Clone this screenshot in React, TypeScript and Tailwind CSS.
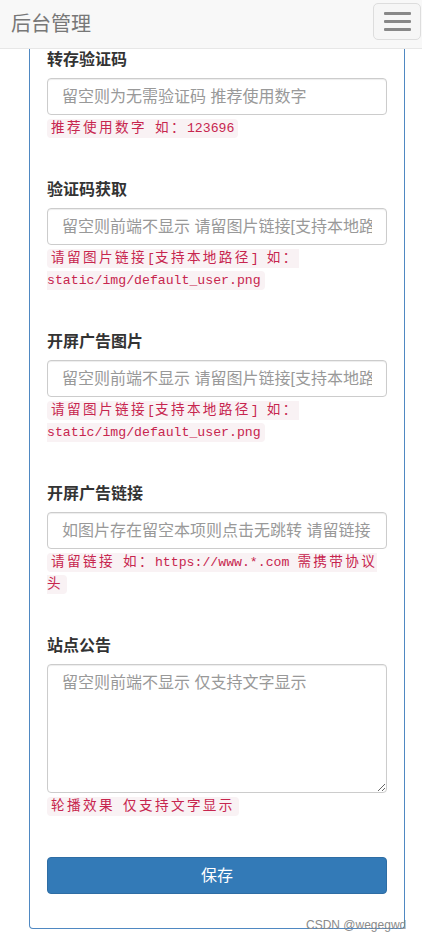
const fields = [
  {
    label: "转存验证码",
    placeholder: "留空则为无需验证码 推荐使用数字",
    help: (
      <>
        <span className="tracking-[2.4px] text-[13.6px]">推荐使用数字</span> <span className="tracking-[2.4px] text-[13.6px]">如：</span>123696
      </>
    ),
  },
  {
    label: "验证码获取",
    placeholder: "留空则前端不显示 请留图片链接[支持本地路径]",
    help: (
      <>
        <span className="tracking-[2.4px] text-[13.6px]">请留图片链接</span>[<span className="tracking-[2.4px] text-[13.6px]">支持本地路径</span>] <span className="tracking-[2.4px] text-[13.6px]">如：</span>
        <span className="whitespace-nowrap">static/img/default_user.png</span>
      </>
    ),
  },
  {
    label: "开屏广告图片",
    placeholder: "留空则前端不显示 请留图片链接[支持本地路径]",
    help: (
      <>
        <span className="tracking-[2.4px] text-[13.6px]">请留图片链接</span>[<span className="tracking-[2.4px] text-[13.6px]">支持本地路径</span>] <span className="tracking-[2.4px] text-[13.6px]">如：</span>
        <span className="whitespace-nowrap">static/img/default_user.png</span>
      </>
    ),
  },
  {
    label: "开屏广告链接",
    placeholder: "如图片存在留空本项则点击无跳转 请留链接",
    help: (
      <>
        <span className="tracking-[2.4px] text-[13.6px]">请留链接</span> <span className="tracking-[2.4px] text-[13.6px]">如：</span>
        <span className="whitespace-nowrap">https://www.*.com</span> <span className="tracking-[2.4px] text-[13.6px]">需携带协议头</span>
      </>
    ),
  },
];

function Help({ children }: { children: React.ReactNode }) {
  return (
    <div className="mt-[3px] font-['Liberation_Mono','Noto_Sans_CJK_SC',monospace] text-[13.2px] leading-[22px]">
      <code className="rounded-[4px] bg-[#f9f2f4] px-[4px] py-[2px] font-['Liberation_Mono','Noto_Sans_CJK_SC',monospace] text-[#c7254e]">
        {children}
      </code>
    </div>
  );
}

export default function App() {
  return (
    <div className="relative min-h-[945px] bg-white font-['Liberation_Sans','Noto_Sans_CJK_SC',sans-serif] text-[#333]">
      {/* Navbar */}
      <div className="flex h-[49px] items-center justify-between border-b border-[#e7e7e7] bg-[#f8f8f8] pl-[11px] pr-[1px]">
        <span className="text-[20px] leading-none text-[#777]">后台管理</span>
        <button className="mb-[6px] flex h-[37px] w-[48px] flex-col items-center justify-center gap-[5px] rounded-[5px] border border-[#ddd] bg-[#f6f6f6]">
          <span className="block h-[3px] w-[27px] rounded-[1px] bg-[#888]" />
          <span className="block h-[3px] w-[27px] rounded-[1px] bg-[#888]" />
          <span className="block h-[3px] w-[27px] rounded-[1px] bg-[#888]" />
        </button>
      </div>

      {/* Panel */}
      <div className="ml-[29px] w-[376px] rounded-b-[4px] border-x border-b border-[#4f88c2] px-[17px] pb-[34px]">
        {fields.map((f) => (
          <div key={f.label} className="mb-[39px]">
            <label className="mb-[7px] block text-[16px] font-bold leading-[22px] text-[#333]">{f.label}</label>
            <input
              className="block h-[37px] w-full rounded-[4px] border border-[#ccc] px-[14px] text-[16px] shadow-[inset_0_1px_1px_rgba(0,0,0,0.075)] outline-none placeholder:text-[#999]"
              placeholder={f.placeholder}
            />
            <Help>{f.help}</Help>
          </div>
        ))}

        <div className="mb-[39px]">
          <label className="mb-[7px] block text-[16px] font-bold leading-[22px] text-[#333]">站点公告</label>
          <textarea
            className="block h-[129px] w-full rounded-[4px] border border-[#ccc] px-[14px] py-[7px] text-[16px] leading-[22px] shadow-[inset_0_1px_1px_rgba(0,0,0,0.075)] outline-none placeholder:text-[#999]"
            placeholder="留空则前端不显示 仅支持文字显示"
          />
          <Help>
            <span className="tracking-[2.4px] text-[13.6px]">轮播效果</span> <span className="tracking-[2.4px] text-[13.6px]">仅支持文字显示</span>
          </Help>
        </div>

        <button className="flex h-[37px] w-full items-center justify-center rounded-[4px] border border-[#2e6da4] bg-[#337ab7] text-[16px] text-white">
          保存
        </button>
      </div>

      <span className="absolute left-[306px] top-[918px] text-[12px] leading-[15px] text-[#8a8a8a]">CSDN @wegegwd</span>
    </div>
  );
}
